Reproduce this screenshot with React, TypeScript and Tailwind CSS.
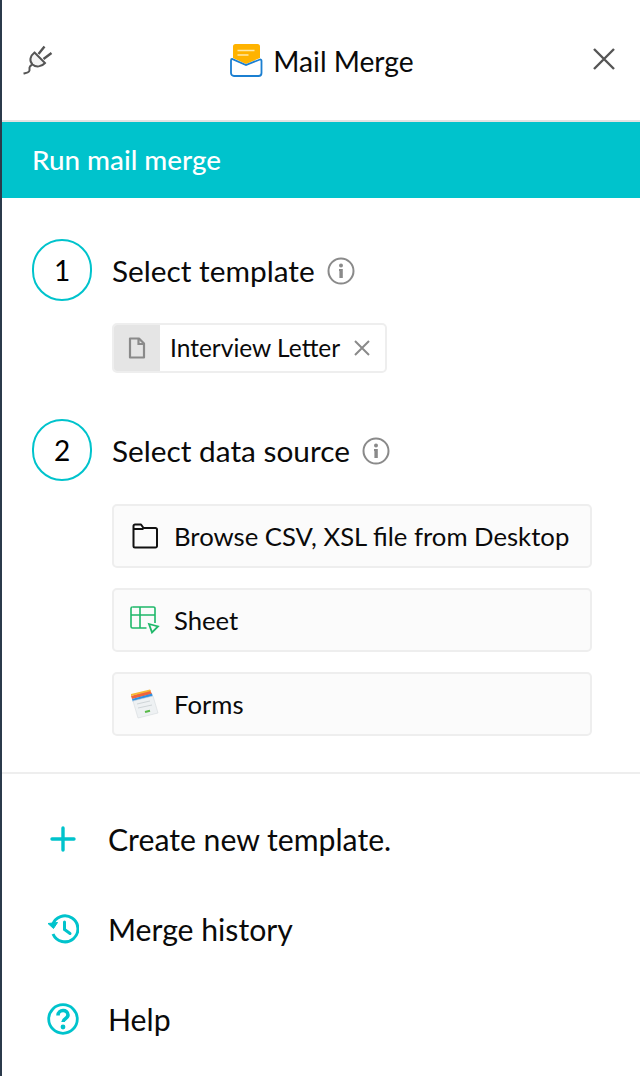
import React from "react";

const Info = () => (
  <svg width="28" height="28" viewBox="0 0 28 28" fill="none" className="ml-[12px] mt-[1px]">
    <circle cx="14" cy="14" r="12.500" stroke="#8a8a8a" strokeWidth="2" />
    <circle cx="14" cy="8.500" r="2" fill="#8a8a8a" />
    <path d="M12 12h3.800v9h-3.400v-7H12z" fill="#8a8a8a" />
  </svg>
);

const Step = ({ n, label }: { n: string; label: string }) => (
  <div className="flex items-center">
    <div className="w-[60px] h-[62px] rounded-full border-2 border-[#00c3cc] flex items-center justify-center text-[28px] text-black">
      {n}
    </div>
    <div className="ml-5 pt-[2px] text-[29.800px] leading-[40px] text-[#0a0a0a]">{label}</div>
    <Info />
  </div>
);

const Source = ({ icon, label }: { icon: React.ReactNode; label: string }) => (
  <div className="h-16 rounded-[5px] border-2 border-[#eeeeee] bg-[#fbfbfb] flex items-center">
    <div className="w-[60px] shrink-0 flex justify-center pl-[1px]">{icon}</div>
    <span className="pt-[2px] text-[25.7px] leading-none text-[#0a0a0a]">{label}</span>
  </div>
);

const FooterRow = ({ icon, label }: { icon: React.ReactNode; label: string }) => (
  <div className="h-[90px] flex items-center">
    <div className="w-[34px] ml-[44px] flex justify-center">{icon}</div>
    <span className="ml-[28px] text-[30.200px] leading-none text-[#0a0a0a]">{label}</span>
  </div>
);

export default function App() {
  return (
    <div
      className="w-[640px] h-[1076px] overflow-hidden bg-white border-l-2 border-[#2b3a4b]"
      style={{ fontFamily: "Lato, 'Liberation Sans', sans-serif" }}
    >
      <header className="h-[122px] border-b-2 border-[#e2e2e2] flex items-center justify-between pl-[20px] pr-[22px]">
        <svg width="34" height="34" viewBox="0 0 34 34" fill="none" stroke="#555" strokeWidth="2" className="mb-[2px]">
          <path d="M12.500 10.500 L23 21 C19.500 25 14 25.500 10.500 22.500 C7 19 8 14 12.500 10.500 Z" fill="#f4f4f4" />
          <path d="M16.500 12 L22.500 4.500 M21.500 17 L29.500 11" strokeWidth="2.400" />
          <path d="M10 22.500 L8 24.500 C6.500 26.500 8.500 27.500 7 29.500 C6 31 4 31 1.500 31.500" strokeWidth="2" />
        </svg>
        <div className="flex items-center mr-[4px]">
          <svg width="34" height="34" viewBox="0 0 34 34" fill="none">
            <path d="M4 3.500a2.500 2.500 0 0 1 2.500-2.500h22A2.500 2.500 0 0 1 31 3.500V15l-14 6-13-6z" fill="#ffb300" />
            <path d="M8.500 7.500h17M8.500 12h11" stroke="#ffe9a8" strokeWidth="1.600" />
            <path d="M2 17.500 c0-1 .5-1.500 1-1.500l14 6 14-5.500c.7-.2 1.500.3 1.500 1.200V30a3 3 0 0 1-3 3H5a3 3 0 0 1-3-3z" stroke="#1b7fd1" strokeWidth="1.800" fill="#fff" />
          </svg>
          <span className="ml-[10px] pt-[2px] text-[28.200px] leading-none text-[#0a0a0a]">Mail Merge</span>
        </div>
        <svg width="26" height="26" viewBox="0 0 26 26" stroke="#555" strokeWidth="2.400" className="mb-[2px] mr-[1px]">
          <path d="M3 3 L23 23 M23 3 L3 23" />
        </svg>
      </header>

      <div className="h-[76px] bg-[#00c3cc] flex items-center pl-[30px] text-white text-[27.800px] font-medium">
        Run mail merge
      </div>

      <main className="h-[576px] border-b-2 border-[#eeeeee] pl-[30px] pr-[46px] pt-[41px]">
        <Step n="1" label="Select template" />
        <div className="ml-[80px] mt-[22px] w-[275px] h-[50px] rounded-[5px] border-2 border-[#eeeeee] flex items-center overflow-hidden">
          <div className="w-[46px] h-full bg-[#e5e5e5] flex items-center justify-center">
            <svg width="18" height="22" viewBox="0 0 18 22" fill="none" stroke="#8a8a8a" strokeWidth="2.200">
              <path d="M2 1.500h9l5 5V20.500H2z" strokeLinejoin="round" />
              <path d="M10.500 1.500V7H16" />
            </svg>
          </div>
          <span className="ml-[10px] text-[24.500px] leading-none text-[#0a0a0a]">Interview Letter</span>
          <svg width="18" height="18" viewBox="0 0 18 18" stroke="#8a8a8a" strokeWidth="2" className="ml-[13px]">
            <path d="M2 2 L16 16 M16 2 L2 16" />
          </svg>
        </div>

        <div className="mt-[46px]">
          <Step n="2" label="Select data source" />
        </div>

        <div className="ml-[80px] mt-[23px] w-[480px] flex flex-col gap-5">
          <Source
            label="Browse CSV, XSL file from Desktop"
            icon={
              <svg width="26" height="26" viewBox="0 0 26 26" fill="none" stroke="#111" strokeWidth="2" strokeLinejoin="round">
                <path d="M1.500 23V3a1.500 1.500 0 0 1 1.500-1.500h6l2.500 3.500H23.500a1.500 1.500 0 0 1 1.500 1.500V23a1.500 1.500 0 0 1-1.500 1.500H3A1.500 1.500 0 0 1 1.500 23z" />
                <path d="M1.500 6h10" />
              </svg>
            }
          />
          <Source
            label="Sheet"
            icon={
              <svg width="30" height="28" viewBox="0 0 30 28" fill="none" stroke="#1fb86a" strokeWidth="1.600">
                <path d="M2.500 1h21A1.500 1.500 0 0 1 25 2.500V17" />
                <path d="M2.500 1A1.500 1.500 0 0 0 1 2.500v18A1.500 1.500 0 0 0 2.500 22h14" />
                <path d="M1 9h24M10 1v21" />
                <path d="M19 18l9 2.500-6 6z" strokeWidth="1.800" />
              </svg>
            }
          />
          <Source
            label="Forms"
            icon={
              <svg width="30" height="30" viewBox="0 0 30 30">
                <path d="M1 7 L20 1 L22 5 L2 10z" fill="#f0643c" />
                <path d="M1 5 L20 .5 L21 2 L1 7z" fill="#f7b733" />
                <path d="M2 10 L22 4.500 L23 8 L3 13z" fill="#2f8fe0" />
                <path d="M3 12 L23 7 L28 24 L8 29z" fill="#eef1f3" stroke="#d5dadd" strokeWidth=".6" />
                <path d="M7 15l13-3M8 19l14-3" stroke="#cfd5d8" strokeWidth="1" />
                <path d="M15 23l5-1.200" stroke="#58b947" strokeWidth="2" />
              </svg>
            }
          />
        </div>
      </main>

      <footer className="pt-[20px]">
        <FooterRow
          label="Create new template."
          icon={
            <svg width="26" height="26" viewBox="0 0 26 26" stroke="#00c3cc" strokeWidth="3.400" strokeLinecap="round">
              <path d="M13 2v22M2 13h22" />
            </svg>
          }
        />
        <FooterRow
          label="Merge history"
          icon={
            <svg width="32" height="30" viewBox="0 0 32 30" fill="none" stroke="#00c3cc" strokeWidth="3">
              <path d="M5.500 11A13 13 0 1 1 6 20" />
              <path d="M1 9.500l5.500 5 4-6z" fill="#00c3cc" strokeWidth="1" />
              <path d="M17.500 8v7.500l5.500 4" strokeLinecap="round" />
            </svg>
          }
        />
        <FooterRow
          label="Help"
          icon={
            <svg width="32" height="32" viewBox="0 0 32 32" fill="none" stroke="#00c3cc" strokeWidth="2.800">
              <circle cx="16" cy="16" r="14.300" />
              <path d="M11 12.500c0-6.500 10-6.500 10-.5 0 4-5 3.500-5 7" strokeWidth="3.600" />
              <circle cx="16" cy="24" r="2.400" fill="#00c3cc" stroke="none" />
            </svg>
          }
        />
      </footer>
    </div>
  );
}
